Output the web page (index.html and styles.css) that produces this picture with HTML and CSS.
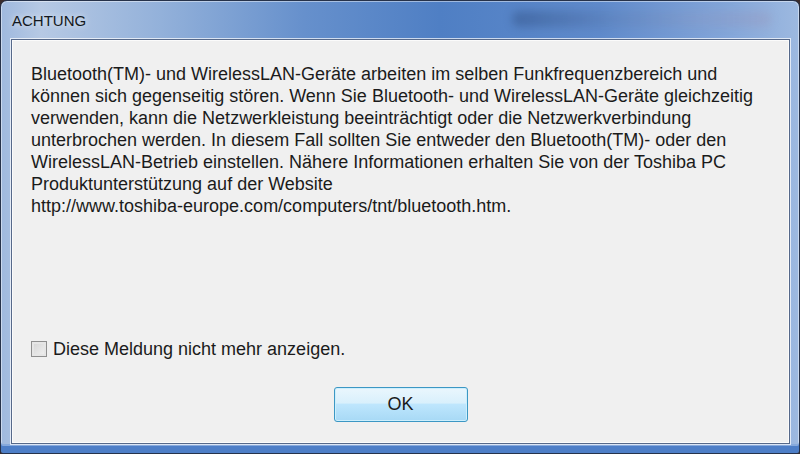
FILE: index.html
```html
<!DOCTYPE html>
<html lang="de">
<head>
  <meta charset="UTF-8">
  <title>ACHTUNG</title>
  <link rel="stylesheet" href="styles.css">
</head>
<body>
  <div class="window">
    <div class="titlebar">
      <div class="title">ACHTUNG</div>
      <div class="title-glow"></div>
    </div>
    <div class="client">
      <div class="message">
        Bluetooth(TM)- und WirelessLAN-Geräte arbeiten im selben Funkfrequenzbereich und<br>
        können sich gegenseitig stören. Wenn Sie Bluetooth- und WirelessLAN-Geräte gleichzeitig<br>
        verwenden, kann die Netzwerkleistung beeinträchtigt oder die Netzwerkverbindung<br>
        unterbrochen werden. In diesem Fall sollten Sie entweder den Bluetooth(TM)- oder den<br>
        WirelessLAN-Betrieb einstellen. Nähere Informationen erhalten Sie von der Toshiba PC<br>
        Produktunterstützung auf der Website<br>
        http://www.toshiba-europe.com/computers/tnt/bluetooth.htm.
      </div>
      <label class="check-row">
        <span class="checkbox"></span>
        <span class="check-label">Diese Meldung nicht mehr anzeigen.</span>
      </label>
      <div class="button-row">
        <button class="button">OK</button>
      </div>
    </div>
  </div>
</body>
</html>
```

FILE: styles.css
```css
body {
  margin: 0;
  padding: 0;
  width: 800px;
  height: 454px;
  overflow: hidden;
  background: #3a2c2c;
  font-family: "Liberation Sans", Arial, sans-serif;
}

.window {
  box-sizing: border-box;
  width: 800px;
  height: 454px;
  display: flex;
  flex-direction: column;
  padding: 0 9px 9px 10px;
  border: 1px solid #26324a;
  border-radius: 7px 7px 3px 3px;
  background: linear-gradient(to right, #9fb9de 0%, #b6c9e4 5%, #93b1da 20%, #6690cc 38%, #4f7fc4 55%, #5f8acb 75%, #86a8da 92%, #9db9e0 100%);
  box-shadow: inset 0 -7px 0 #4d7ec7, inset 0 -9px 0 #86a9dc, inset 0 0 0 1px rgba(255, 255, 255, 0.45);
}

.titlebar {
  position: relative;
  height: 38px;
  display: flex;
  align-items: center;
  padding-left: 1px;
}

.title {
  font-size: 15px;
  color: #131820;
  text-shadow: 0 0 6px rgba(255, 255, 255, 0.8);
}

.title-glow {
  position: absolute;
  right: 18px;
  top: 10px;
  width: 260px;
  height: 16px;
  border-radius: 8px;
  background: linear-gradient(to right, rgba(40, 70, 120, 0.4), rgba(90, 120, 170, 0.25) 40%, rgba(140, 150, 190, 0.25) 70%, rgba(160, 130, 160, 0.2));
  filter: blur(4px);
}

.client {
  flex: 1;
  display: flex;
  flex-direction: column;
  background: #f0f0f0;
  border: 1px solid #56698a;
  box-shadow: 0 0 0 1px rgba(255, 255, 255, 0.7), inset 0 0 0 1px #fbfbfb;
  padding: 23px 19px 21px 19px;
}

.message {
  font-size: 18px;
  line-height: 22px;
  color: #1b1b1b;
  white-space: nowrap;
}

.check-row {
  margin-top: auto;
  display: flex;
  align-items: center;
  gap: 6px;
  height: 22px;
  color: #1b1b1b;
  font-size: 18px;
}

.checkbox {
  width: 14px;
  height: 14px;
  border: 1px solid #8f8f8f;
  background: linear-gradient(to bottom right, #d4d4d4, #f2f2f2);
  box-shadow: inset 0 0 0 2px #e6e6e6;
}

.button-row {
  display: flex;
  justify-content: center;
  margin-top: 27px;
}

.button {
  width: 134px;
  height: 35px;
  border: 1px solid #3c97c4;
  border-radius: 3px;
  background: linear-gradient(to bottom, #eaf6fd 0%, #d9f0fc 45%, #bee6fd 50%, #a7d9f5 100%);
  box-shadow: inset 0 0 0 1px #cdeffd;
  font-family: "Liberation Sans", Arial, sans-serif;
  font-size: 18px;
  color: #1b1b1b;
  padding: 0;
}
```
